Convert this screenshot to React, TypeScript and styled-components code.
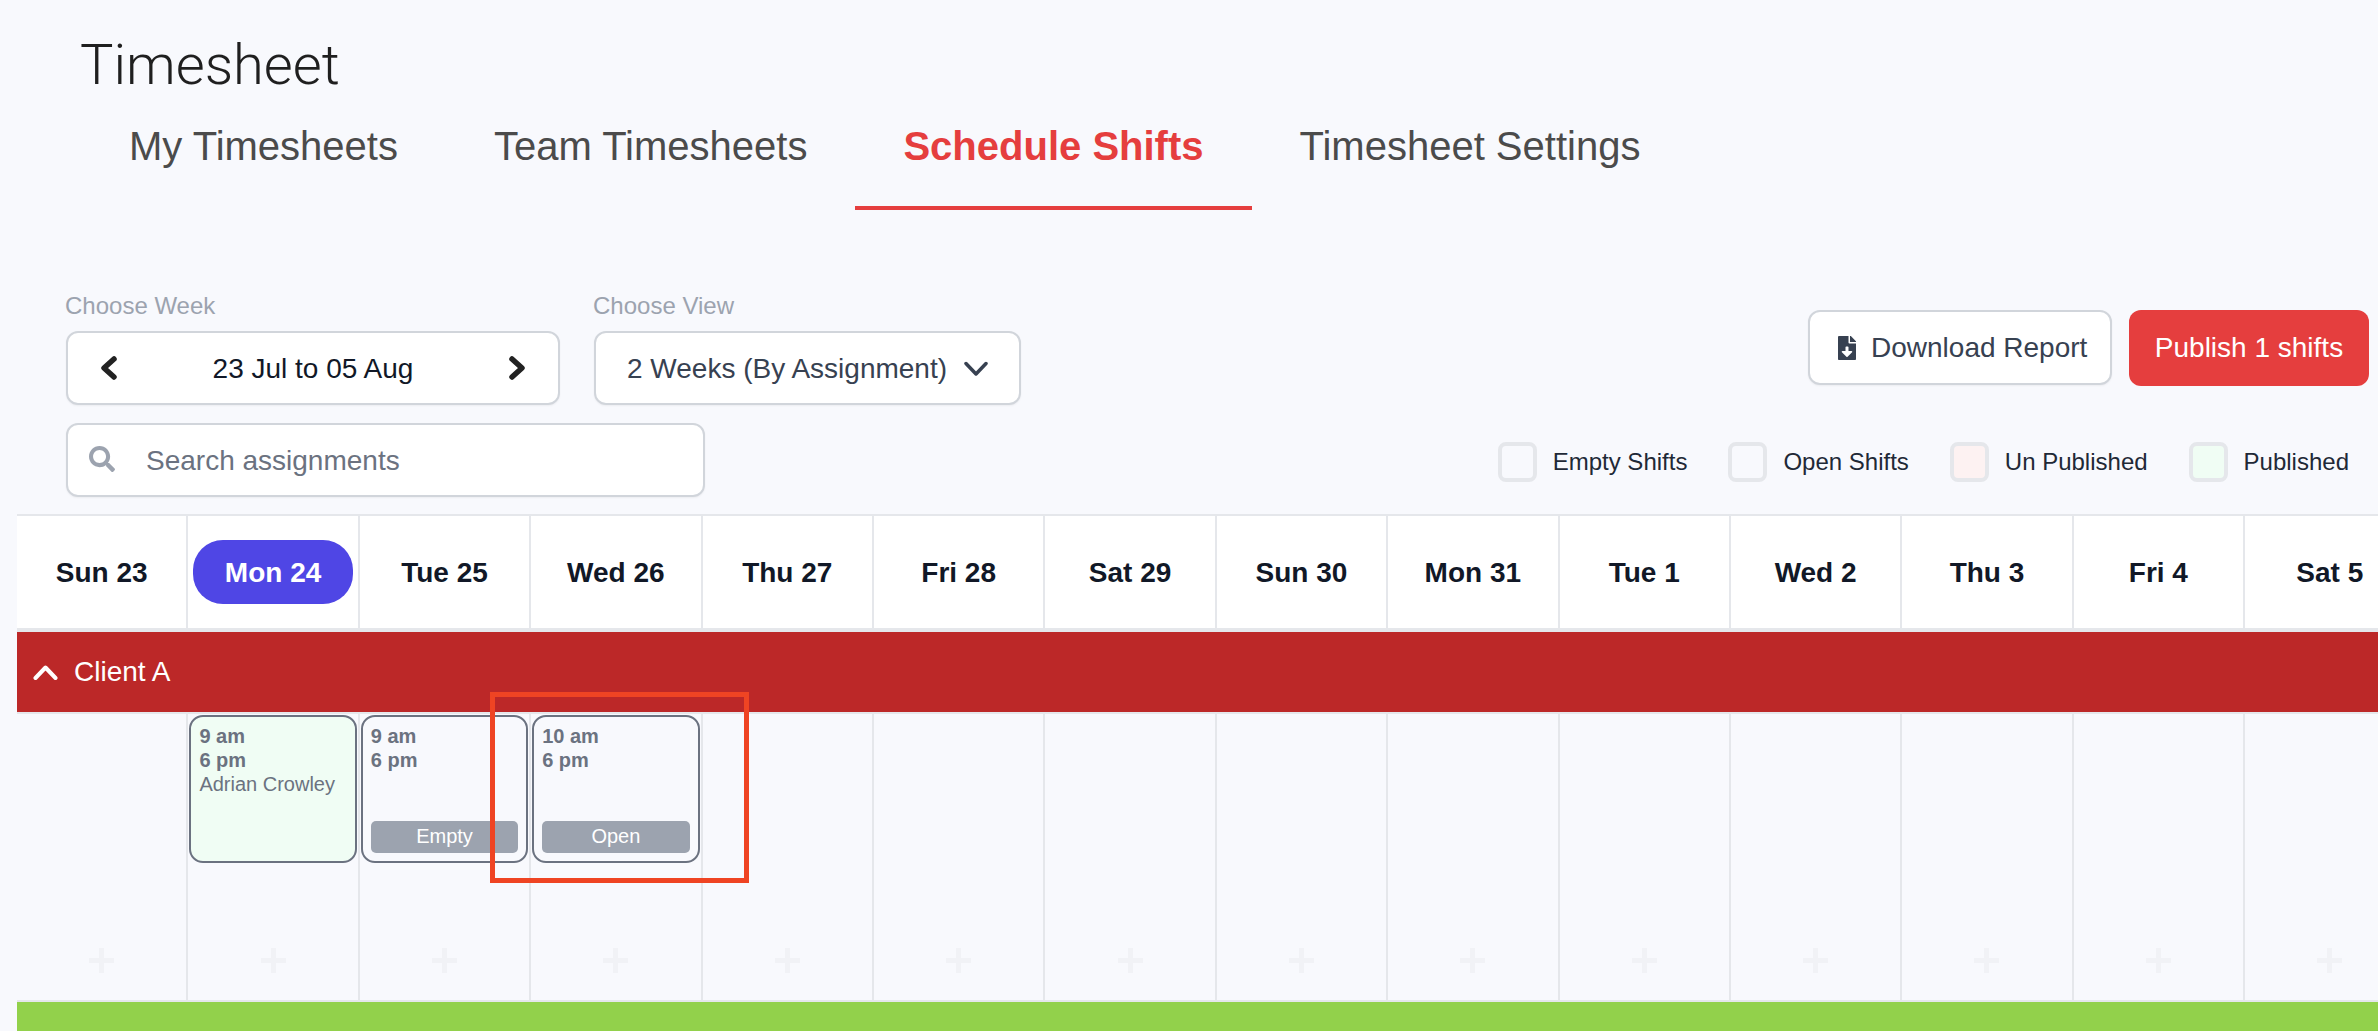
import React from "react";
import styled, { createGlobalStyle } from "styled-components";
import { FaFileDownload, FaSearch } from "react-icons/fa";

const GlobalStyle = createGlobalStyle`
  html, body { margin: 0; padding: 0; background: #f8f9fd; }
  * { box-sizing: border-box; }
  body { font-family: "Liberation Sans", Arial, sans-serif; }
`;

const COLUMN_WIDTH = 171.4;
const BORDER = "#e5e7eb";

const Page = styled.div`
  position: relative;
  width: 2378px;
  height: 1031px;
  overflow: hidden;
  padding-left: 17px;
  background: #f8f9fd;
`;
const Title = styled.h1`
  margin: 0 0 0 63px;
  padding-top: 34px;
  height: 97px;
  font-family: Roboto, "Liberation Sans", sans-serif;
  font-size: 56px;
  line-height: 63px;
  font-weight: 300;
  color: #1f1f1f;
`;
const Tabs = styled.nav`
  display: flex;
  margin-left: 64px;
`;
const Tab = styled.div<{ $active?: boolean }>`
  padding: 25px 48px 36px;
  font-size: 40px;
  line-height: 48px;
  font-weight: ${({ $active }) => ($active ? 700 : 400)};
  color: ${({ $active }) => ($active ? "#e53e3e" : "#4b4b4b")};
  border-bottom: 4px solid ${({ $active }) => ($active ? "#e53e3e" : "transparent")};
`;
const Toolbar = styled.div`
  display: flex;
  justify-content: space-between;
  margin-top: 80px;
  padding: 0 9px 0 49px;
`;
const Filters = styled.div`
  display: flex;
  flex-direction: column;
  gap: 18px;
`;
const FilterRow = styled.div`
  display: flex;
  gap: 34px;
`;
const Field = styled.div`
  display: flex;
  flex-direction: column;
  gap: 9px;
`;
const Label = styled.label`
  font-size: 24px;
  line-height: 32px;
  margin-left: -1px;
  color: #9ca3af;
`;
const Control = styled.div<{ $width: number }>`
  display: flex;
  align-items: center;
  width: ${({ $width }) => $width}px;
  height: 74px;
  background: #fff;
  border: 2px solid #d1d5db;
  border-radius: 12px;
  box-shadow: 0 1px 2px rgba(0, 0, 0, 0.05);
`;
const WeekArrow = styled.div`
  flex: 0 0 82px;
  height: 100%;
  display: flex;
  align-items: center;
  justify-content: center;
`;
const WeekValue = styled.div`
  flex: 1;
  padding-top: 2px;
  text-align: center;
  font-size: 28px;
  color: #111827;
`;
const ViewSelect = styled(Control)`
  justify-content: space-between;
  padding: 2px 31px 0;
  font-size: 28px;
  color: #374151;
`;
const SearchBox = styled(Control)`
  padding-left: 21px;
  gap: 31px;
  color: #9ca3af;
  svg { flex: none; font-size: 26px; margin-bottom: 3px; }
`;
const SearchInput = styled.input`
  flex: 1;
  min-width: 0;
  border: 0;
  outline: 0;
  padding: 2px 0 0;
  background: transparent;
  font-family: inherit;
  font-size: 28px;
  &::placeholder { color: #6b7280; opacity: 1; }
`;
const Actions = styled.div`
  display: flex;
  flex-direction: column;
  align-items: flex-end;
  padding-top: 20px;
`;
const ButtonRow = styled.div`
  display: flex;
  gap: 17px;
`;
const OutlineButton = styled.button`
  display: flex;
  align-items: center;
  gap: 12px;
  width: 304px;
  height: 75px;
  padding: 0 25px;
  background: #fff;
  border: 2px solid #d1d5db;
  border-radius: 12px;
  box-shadow: 0 1px 2px rgba(0, 0, 0, 0.05);
  font-family: inherit;
  font-size: 28px;
  white-space: nowrap;
  color: #374151;
  svg { flex: none; font-size: 24px; }
`;
const PrimaryButton = styled.button`
  width: 240px;
  height: 76px;
  border: 0;
  border-radius: 12px;
  background: #e53e3e;
  font-family: inherit;
  font-size: 28px;
  color: #fff;
`;
const Legend = styled.div`
  display: flex;
  gap: 41px;
  margin-top: 56px;
  margin-right: 20px;
`;
const LegendItem = styled.div`
  display: flex;
  align-items: center;
  gap: 16px;
  font-size: 24px;
  color: #1f2937;
`;
const Swatch = styled.span<{ $color: string }>`
  width: 39px;
  height: 40px;
  border: 4px solid ${BORDER};
  border-radius: 8px;
  background: ${({ $color }) => $color};
`;
const Board = styled.div`
  width: ${COLUMN_WIDTH * 14}px;
  margin-top: 17px;
`;
const DayRow = styled.div`
  display: grid;
  grid-template-columns: repeat(14, ${COLUMN_WIDTH}px);
  height: 118px;
  background: #fff;
  border-top: 2px solid ${BORDER};
  border-bottom: 4px solid ${BORDER};
`;
const DayCell = styled.div`
  display: flex;
  align-items: center;
  justify-content: center;
  border-right: 2px solid ${BORDER};
`;
const DayLabel = styled.span<{ $today?: boolean }>`
  padding: 17px ${({ $today }) => ($today ? 32 : 0)}px 15px;
  border-radius: 30px;
  font-size: 28px;
  line-height: 32px;
  font-weight: 700;
  color: ${({ $today }) => ($today ? "#fff" : "#111827")};
  background: ${({ $today }) => ($today ? "#4f46e5" : "transparent")};
`;
const ClientBar = styled.div`
  display: flex;
  align-items: center;
  gap: 16px;
  height: 80px;
  padding-left: 16px;
  font-size: 28px;
  color: #fff;
  background: #bc2828;
`;
const ShiftRow = styled.div`
  display: grid;
  grid-template-columns: repeat(14, ${COLUMN_WIDTH}px);
  height: 290px;
  border-top: 2px solid ${BORDER};
  border-bottom: 2px solid ${BORDER};
`;
const ShiftCell = styled.div`
  display: flex;
  flex-direction: column;
  align-items: center;
  padding: 1px 1px 27px;
  border-right: 2px solid ${BORDER};
`;
const ShiftCard = styled.div<{ $published?: boolean }>`
  display: flex;
  flex-direction: column;
  width: 100%;
  height: 148px;
  padding: 7px 8px 8px;
  border: 2px solid #6b7280;
  border-radius: 14px;
  background: ${({ $published }) => ($published ? "#f0fdf4" : "transparent")};
  font-size: 20px;
  line-height: 24px;
  color: #6b7280;
`;
const ShiftTime = styled.div`
  font-weight: 700;
`;
const ShiftBadge = styled.div`
  margin-top: auto;
  height: 32px;
  border-radius: 5px;
  background: #9ca3af;
  color: #fff;
  font-size: 20px;
  line-height: 31px;
  text-align: center;
`;
const AddIcon = styled.svg`
  margin-top: auto;
  width: 25px;
  height: 25px;
  color: #f1f2f6;
`;
const NextClientBar = styled.div`
  height: 29px;
  background: #92d14b;
`;
const Highlight = styled.div`
  position: absolute;
  left: 490px;
  top: 692px;
  width: 259px;
  height: 191px;
  border: 5px solid #ef4423;
  pointer-events: none;
`;

const days = [
  "Sun 23", "Mon 24", "Tue 25", "Wed 26", "Thu 27", "Fri 28", "Sat 29",
  "Sun 30", "Mon 31", "Tue 1", "Wed 2", "Thu 3", "Fri 4", "Sat 5",
];
const tabs = ["My Timesheets", "Team Timesheets", "Schedule Shifts", "Timesheet Settings"];
const legend = [
  { label: "Empty Shifts", color: "#f8f9fd" },
  { label: "Open Shifts", color: "#f8f9fd" },
  { label: "Un Published", color: "#fdf2f2" },
  { label: "Published", color: "#f0fdf4" },
];
const shifts: Record<number, { start: string; end: string; name?: string; badge?: string; published?: boolean }> = {
  1: { start: "9 am", end: "6 pm", name: "Adrian Crowley", published: true },
  2: { start: "9 am", end: "6 pm", badge: "Empty" },
  3: { start: "10 am", end: "6 pm", badge: "Open" },
};

const WeekChevron = ({ points }: { points: string }) => (
  <svg width="18" height="26" viewBox="0 0 18 26" fill="none" stroke="#222" strokeWidth="5.5" strokeLinecap="round" strokeLinejoin="round">
    <polyline points={points} />
  </svg>
);

const App = () => (
  <Page>
    <GlobalStyle />
    <Title>Timesheet</Title>
    <Tabs>
      {tabs.map((tab) => (
        <Tab key={tab} $active={tab === "Schedule Shifts"}>
          {tab}
        </Tab>
      ))}
    </Tabs>
    <Toolbar>
      <Filters>
        <FilterRow>
          <Field>
            <Label>Choose Week</Label>
            <Control $width={494}>
              <WeekArrow><WeekChevron points="14,4 4,13 14,22" /></WeekArrow>
              <WeekValue>23 Jul to 05 Aug</WeekValue>
              <WeekArrow><WeekChevron points="4,4 14,13 4,22" /></WeekArrow>
            </Control>
          </Field>
          <Field>
            <Label>Choose View</Label>
            <ViewSelect $width={427}>
              2 Weeks (By Assignment)
              <svg width="24" height="16" viewBox="0 0 24 16" fill="none" stroke="#374151" strokeWidth="3.5" strokeLinecap="round" strokeLinejoin="round">
                <polyline points="2,2.5 12,13 22,2.5" />
              </svg>
            </ViewSelect>
          </Field>
        </FilterRow>
        <SearchBox $width={639}>
          <FaSearch />
          <SearchInput placeholder="Search assignments" readOnly />
        </SearchBox>
      </Filters>
      <Actions>
        <ButtonRow>
          <OutlineButton>
            <FaFileDownload />
            Download Report
          </OutlineButton>
          <PrimaryButton>Publish 1 shifts</PrimaryButton>
        </ButtonRow>
        <Legend>
          {legend.map((item) => (
            <LegendItem key={item.label}>
              <Swatch $color={item.color} />
              {item.label}
            </LegendItem>
          ))}
        </Legend>
      </Actions>
    </Toolbar>
    <Board>
      <DayRow>
        {days.map((day) => (
          <DayCell key={day}>
            <DayLabel $today={day === "Mon 24"}>{day}</DayLabel>
          </DayCell>
        ))}
      </DayRow>
      <ClientBar>
        <svg width="25" height="17" viewBox="0 0 25 17" fill="none" stroke="#fff" strokeWidth="4" strokeLinecap="round" strokeLinejoin="round">
          <polyline points="2.5,14 12.5,3.5 22.5,14" />
        </svg>
        Client A
      </ClientBar>
      <ShiftRow>
        {days.map((day, i) => {
          const shift = shifts[i];
          return (
            <ShiftCell key={day}>
              {shift && (
                <ShiftCard $published={shift.published}>
                  <ShiftTime>{shift.start}</ShiftTime>
                  <ShiftTime>{shift.end}</ShiftTime>
                  {shift.name && <div>{shift.name}</div>}
                  {shift.badge && <ShiftBadge>{shift.badge}</ShiftBadge>}
                </ShiftCard>
              )}
              <AddIcon viewBox="0 0 25 25" fill="none" stroke="currentColor" strokeWidth="5">
                <path d="M12.5 0v25M0 12.5h25" />
              </AddIcon>
            </ShiftCell>
          );
        })}
      </ShiftRow>
      <NextClientBar />
    </Board>
    <Highlight />
  </Page>
);

export default App;
